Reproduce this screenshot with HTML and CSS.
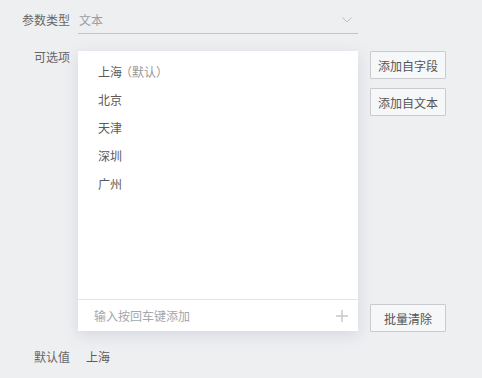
FILE: index.html
```html
<!DOCTYPE html>
<html lang="zh-CN">
<head>
    <meta charset="UTF-8">
    <title>参数设置</title>
    <link rel="stylesheet" href="styles.css">
</head>
<body>
    <div class="param-form">
        <div class="form-row">
            <label class="row-label">参数类型</label>
            <div class="select-box">
                <span class="select-value">文本</span>
                <svg class="select-arrow" width="10" height="6" viewBox="0 0 10 6">
                    <path d="M0.5 0.5 L5 5 L9.5 0.5" fill="none" stroke="#b8bcc4" stroke-width="1"/>
                </svg>
            </div>
        </div>

        <div class="form-row options-row">
            <label class="row-label">可选项</label>
            <div class="options-card">
                <ul class="option-list">
                    <li>上海<span class="tag-default">（默认）</span></li>
                    <li>北京</li>
                    <li>天津</li>
                    <li>深圳</li>
                    <li>广州</li>
                </ul>
                <div class="option-input">
                    <input type="text" placeholder="输入按回车键添加">
                    <svg class="add-icon" width="12" height="12" viewBox="0 0 12 12">
                        <path d="M6 0 V12 M0 6 H12" stroke="#c4c7cc" stroke-width="1.4"/>
                    </svg>
                </div>
            </div>
            <div class="side-actions">
                <button type="button">添加自字段</button>
                <button type="button">添加自文本</button>
                <button type="button" class="btn-clear">批量清除</button>
            </div>
        </div>

        <div class="form-row default-row">
            <label class="row-label">默认值</label>
            <span class="default-value">上海</span>
        </div>
    </div>
</body>
</html>
```

FILE: styles.css
```css
body {
    margin: 0;
    background-color: #eeeff1;
    font-family: "Noto Sans CJK SC", "Noto Sans", sans-serif;
    font-size: 12px;
    color: #555;
}

.param-form {
    padding-top: 8px;
}

.form-row {
    display: flex;
    align-items: flex-start;
}

.row-label {
    width: 70px;
    margin-right: 8px;
    text-align: right;
    color: #666;
    line-height: 24px;
    flex-shrink: 0;
}

.select-box {
    width: 280px;
    height: 26px;
    box-sizing: border-box;
    border-bottom: 1px solid #b3c3f4;
    display: flex;
    align-items: center;
    justify-content: space-between;
    padding: 0 4px 2px 1px;
}

.select-value {
    color: #9a9da3;
}

.select-arrow {
    margin-right: 2px;
}

.options-row {
    margin-top: 17px;
}

.options-row .row-label {
    line-height: 12px;
}

.options-card {
    width: 280px;
    height: 280px;
    background-color: #fff;
    box-shadow: 0 4px 14px rgba(120, 130, 160, 0.22);
    display: flex;
    flex-direction: column;
}

.option-list {
    list-style: none;
    margin: 0;
    padding: 7px 0 0 20px;
    flex: 1;
}

.option-list li {
    height: 28px;
    line-height: 28px;
    color: #5a5a5a;
}

.tag-default {
    color: #999;
    margin-left: -2px;
}

.option-input {
    height: 31px;
    border-top: 1px solid #e3e4e7;
    display: flex;
    align-items: center;
    padding: 0 10px 0 16px;
}

.option-input input {
    flex: 1;
    border: none;
    outline: none;
    font-family: inherit;
    font-size: 12px;
    color: #555;
    padding: 0;
    background: transparent;
}

.option-input input::placeholder {
    color: #a4a7ad;
}

.side-actions {
    margin-left: 12px;
    height: 280px;
    display: flex;
    flex-direction: column;
    gap: 9px;
}

.side-actions button {
    width: 76px;
    height: 28px;
    padding: 0;
    font-family: inherit;
    font-size: 12px;
    color: #555;
    background-color: #f6f7f9;
    border: 1px solid #c9cbcf;
    border-radius: 1px;
}

.side-actions .btn-clear {
    margin-top: auto;
    margin-bottom: -1px;
}

.default-row {
    margin-top: 14px;
}

.default-value {
    line-height: 24px;
    margin-left: 8px;
    color: #5a5a5a;
}
```
